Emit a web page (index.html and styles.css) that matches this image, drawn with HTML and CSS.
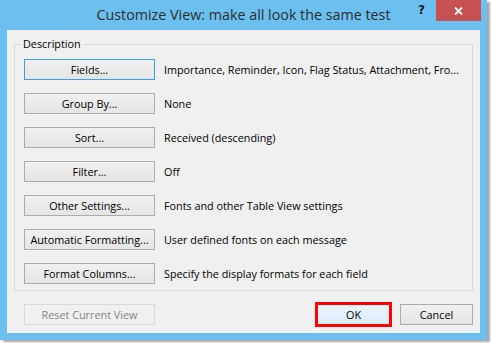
FILE: index.html
```html
<!DOCTYPE html>
<html>
<head>
<meta charset="utf-8">
<link rel="stylesheet" href="styles.css">
</head>
<body>
<div class="window">
  <div class="titlebar">
    <div class="title">Customize View: make all look the same test</div>
    <div class="controls">
      <span class="help">?</span>
      <span class="close"><svg width="9" height="8" viewBox="0 0 9 8"><path d="M1 0.5 L8 7.5 M8 0.5 L1 7.5" stroke="#fff" stroke-width="1.8" fill="none"/></svg></span>
    </div>
  </div>
  <div class="client">
    <fieldset class="group">
      <legend class="legend">Description</legend>
      <div class="rows">
        <button class="btn focused">Fields...</button><span class="desc">Importance, Reminder, Icon, Flag Status, Attachment, Fro...</span>
        <button class="btn">Group By...</button><span class="desc">None</span>
        <button class="btn">Sort...</button><span class="desc">Received (descending)</span>
        <button class="btn">Filter...</button><span class="desc">Off</span>
        <button class="btn">Other Settings...</button><span class="desc">Fonts and other Table View settings</span>
        <button class="btn">Automatic Formatting...</button><span class="desc">User defined fonts on each message</span>
        <button class="btn">Format Columns...</button><span class="desc">Specify the display formats for each field</span>
      </div>
    </fieldset>
    <div class="footer">
      <button class="btn disabled">Reset Current View</button>
      <div class="spacer"></div>
      <button class="btn small ok">OK</button>
      <button class="btn small">Cancel</button>
    </div>
  </div>
</div>
</body>
</html>
```
FILE: styles.css
```css
html, body {
  margin: 0;
  padding: 0;
  background: #ffffff;
}
body {
  font-family: "Open Sans", "Noto Sans", sans-serif;
  width: 491px;
  height: 343px;
  overflow: hidden;
}
.window {
  width: 487px;
  height: 340px;
  box-sizing: border-box;
  background: #6bc0ef;
  padding: 0 7px 7px 7px;
  display: flex;
  flex-direction: column;
  box-shadow: 3px 2px 2px rgba(0, 0, 0, 0.35);
}
.titlebar {
  height: 30px;
  margin: 0 -7px;
  display: grid;
  grid-template-columns: 1fr auto 1fr;
  align-items: start;
}
.title {
  grid-column: 2;
  font-size: 14.3px;
  line-height: 20px;
  padding-top: 5px;
  color: #2e2e2e;
  white-space: nowrap;
}
.controls {
  grid-column: 3;
  justify-self: end;
  display: flex;
  align-items: flex-start;
  margin-right: 6px;
}
.help {
  font-family: "DejaVu Sans", sans-serif;
  font-weight: bold;
  font-size: 12px;
  line-height: 14px;
  color: #1e1e1e;
  margin-top: 3px;
  margin-right: 11px;
}
.close {
  width: 45px;
  height: 21px;
  background: #c75050;
  display: flex;
  align-items: center;
  justify-content: center;
}
.client {
  flex: 1;
  background: #f0f0f0;
  padding: 6px 7px 0 7px;
  display: flex;
  flex-direction: column;
}
.group {
  margin: 0;
  border: 1px solid #d9d9d9;
  padding: 7px 8px 6px 9px;
  min-width: 0;
}
.legend {
  font-size: 10.8px;
  line-height: 16px;
  padding: 0 2px;
  margin-left: -3px;
  color: #000;
}
.rows {
  display: grid;
  grid-template-columns: 131px 1fr;
  grid-auto-rows: 21px;
  row-gap: 13px;
  column-gap: 9px;
  align-items: center;
}
.btn {
  font-family: "Open Sans", "Noto Sans", sans-serif;
  font-size: 10.8px;
  color: #000;
  height: 21px;
  width: 131px;
  box-sizing: border-box;
  margin: 0;
  padding: 0;
  border: 1px solid #acacac;
  border-radius: 0;
  background: linear-gradient(#f0f0f0, #e5e5e5);
  line-height: 19px;
  white-space: nowrap;
}
.btn.focused {
  border-color: #3c9ff2;
}
.btn.disabled {
  color: #838383;
  border-color: #d9d9d9;
  background: #f0f0f0;
}
.btn.small {
  width: 73px;
}
.btn.ok {
  background: linear-gradient(#ecf4fc, #dcecfc);
  border-color: #3c9ff2;
  outline: 3px solid #ff0000;
  outline-offset: -1px;
  margin-right: 10px;
}
.desc {
  font-size: 10.8px;
  color: #000;
  white-space: nowrap;
}
.footer {
  display: flex;
  margin-top: 13px;
  padding: 0 0 0 10px;
}
.spacer {
  flex: 1;
}
```
